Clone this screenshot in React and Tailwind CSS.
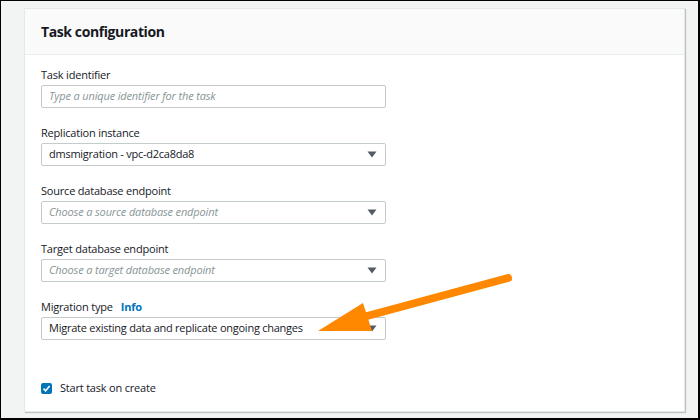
import React from "react";

function Caret() {
  return (
    <svg width="10" height="7" viewBox="0 0 10 7" className="shrink-0">
      <path d="M0.5 0.5 H9.5 L5 6.5 Z" fill="#545b64" />
    </svg>
  );
}

function Field({ label, children, info }) {
  return (
    <div className="flex flex-col">
      <div className="h-[17px] flex items-center gap-[8px] text-[11px] tracking-[-0.2px] text-[#16191f] leading-none">
        <span>{label}</span>
        {info && <span className="font-bold text-[#0073bb]">Info</span>}
      </div>
      <div className="mt-[2px]">{children}</div>
    </div>
  );
}

function Box({ text, placeholder, select }) {
  return (
    <div className="w-[345px] h-[23px] border border-[#c3cbcb] rounded-[2px] bg-white flex items-center pl-[7px] pr-[8px] justify-between">
      {placeholder ? (
        <span className="italic text-[11px] tracking-[-0.15px] text-[#879596]">{placeholder}</span>
      ) : (
        <span className="text-[11px] tracking-[-0.25px] text-[#16191f]">{text}</span>
      )}
      {select && <Caret />}
    </div>
  );
}

export default function App() {
  return (
    <div
      className="w-[700px] h-[420px] bg-[#f2f3f3] border-t border-l border-r-2 border-b-2 border-black relative overflow-hidden"
      style={{ fontFamily: '"Open Sans", "Noto Sans", sans-serif' }}
    >
      <div className="absolute left-[23px] top-[7px] w-[661px] h-[404px] bg-white border border-[#e4e8e8] shadow-[1px_1px_1px_rgba(0,0,0,0.2)] flex flex-col">
        <div className="h-[46px] bg-[#fafafa] border-b border-[#eaeded] flex items-center pl-[16px]">
          <h2 className="text-[14px] tracking-[-0.4px] font-bold text-[#16191f]">Task configuration</h2>
        </div>
        <div className="flex flex-col pl-[16px] pt-[11px] gap-[16px]">
          <Field label="Task identifier">
            <Box placeholder="Type a unique identifier for the task" />
          </Field>
          <Field label="Replication instance">
            <Box text="dmsmigration - vpc-d2ca8da8" select />
          </Field>
          <Field label="Source database endpoint">
            <Box placeholder="Choose a source database endpoint" select />
          </Field>
          <Field label="Target database endpoint">
            <Box placeholder="Choose a target database endpoint" select />
          </Field>
          <Field label="Migration type" info>
            <Box text="Migrate existing data and replicate ongoing changes" select />
          </Field>
          <div className="flex items-center gap-[8px] mt-[24px] h-[17px]">
            <div className="w-[11px] h-[11px] rounded-[2px] bg-[#0073bb] flex items-center justify-center">
              <svg width="9" height="9" viewBox="0 0 9 9">
                <path d="M1.5 4.6 L3.6 6.7 L7.6 2" stroke="white" strokeWidth="1.6" fill="none" />
              </svg>
            </div>
            <span className="text-[11px] tracking-[-0.2px] text-[#16191f]">Start task on create</span>
          </div>
        </div>
      </div>
      <svg className="absolute left-0 top-0" width="700" height="420" viewBox="0 0 700 420">
        <line x1="507" y1="277" x2="355" y2="318" stroke="#ff8800" strokeWidth="8" strokeLinecap="round" />
        <path d="M317 330 L362 302 L371 330 Z" fill="#ff8800" />
      </svg>
    </div>
  );
}
